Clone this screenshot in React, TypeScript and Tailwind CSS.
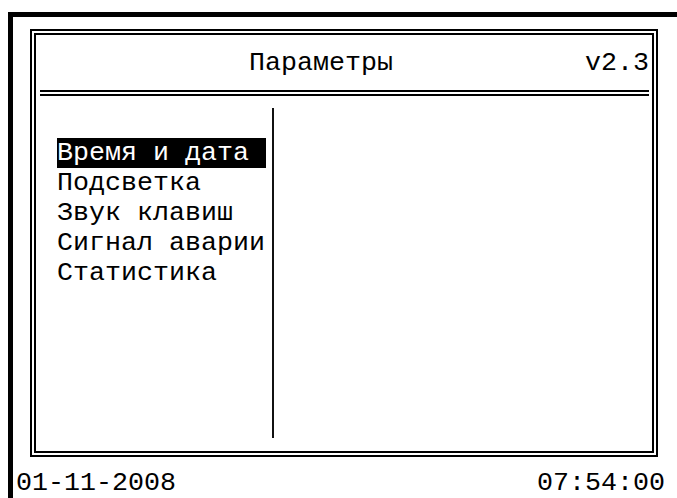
const menuItems = [
  "Время и дата",
  "Подсветка",
  "Звук клавиш",
  "Сигнал аварии",
  "Статистика",
];

export default function App() {
  const selected = 0;

  return (
    <div className="w-[677px] h-[498px] overflow-hidden bg-white text-black font-['Liberation_Mono',monospace] text-[26.67px] leading-[30px]">
      {/* outer thick frame, only top and left edges are on screen */}
      <div className="ml-[8px] mt-[12px] w-[720px] h-[560px] border-t-[5px] border-l-[5px] border-black pt-[12px]">
        {/* double-line panel */}
        <div className="ml-[17px] w-[628px] h-[428px] border-[6px] border-double border-black flex flex-col">
          <div className="h-[55px] flex items-center pl-[213px] pr-[3px]">
            <span>Параметры</span>
            <span className="ml-auto">v2.3</span>
          </div>
          <div className="ml-[4px] mr-[3px] border-t-[6px] border-double border-black" />

          <div className="flex pl-[21px] pt-[12px]">
            <ul className="w-[209px] pt-[30px]">
              {menuItems.map((item, i) => (
                <li
                  key={item}
                  className={
                    i === selected
                      ? "h-[30px] bg-black text-white whitespace-pre"
                      : "h-[30px] whitespace-pre"
                  }
                >
                  {item}
                </li>
              ))}
            </ul>
            <div className="ml-[6px] w-[2px] h-[330px] bg-[#111]" />
          </div>
        </div>

        {/* status line */}
        <div className="mt-[11px] pl-[3px] w-[652px] flex justify-between">
          <span>01-11-2008</span>
          <span>07:54:00</span>
        </div>
      </div>
    </div>
  );
}
